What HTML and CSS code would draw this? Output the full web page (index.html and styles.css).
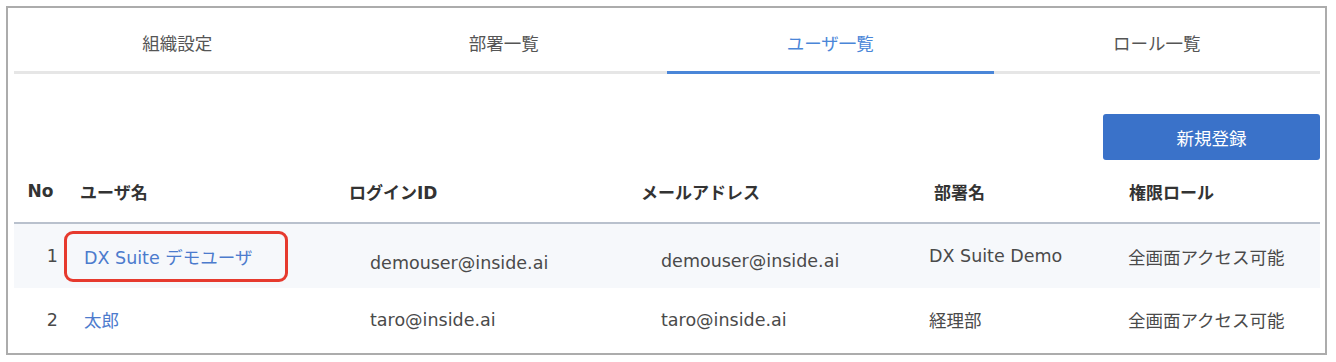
FILE: index.html
```html
<!DOCTYPE html>
<html lang="ja">
<head>
    <meta charset="UTF-8">
    <meta name="viewport" content="width=device-width, initial-scale=1.0">
    <title>ユーザ一覧</title>
    <link rel="stylesheet" href="styles.css">
</head>
<body>
    <div class="panel">
        <div class="tabs">
            <div class="tab">組織設定</div>
            <div class="tab">部署一覧</div>
            <div class="tab active">ユーザ一覧</div>
            <div class="tab">ロール一覧</div>
        </div>
        <div class="toolbar">
            <button class="btn-primary">新規登録</button>
        </div>
        <table class="users">
            <colgroup>
                <col class="c-no">
                <col class="c-name">
                <col class="c-login">
                <col class="c-mail">
                <col class="c-dept">
                <col class="c-role">
            </colgroup>
            <thead>
                <tr>
                    <th class="no">No</th>
                    <th>ユーザ名</th>
                    <th>ログインID</th>
                    <th>メールアドレス</th>
                    <th>部署名</th>
                    <th>権限ロール</th>
                </tr>
            </thead>
            <tbody>
                <tr class="odd">
                    <td class="no">1</td>
                    <td class="name highlight"><a href="#">DX Suite デモユーザ</a></td>
                    <td class="login low">demouser@inside.ai</td>
                    <td class="mail mid">demouser@inside.ai</td>
                    <td class="dept">DX Suite Demo</td>
                    <td class="role">全画面アクセス可能</td>
                </tr>
                <tr class="even">
                    <td class="no">2</td>
                    <td class="name"><a href="#">太郎</a></td>
                    <td class="login">taro@inside.ai</td>
                    <td class="mail">taro@inside.ai</td>
                    <td class="dept">経理部</td>
                    <td class="role">全画面アクセス可能</td>
                </tr>
            </tbody>
        </table>
    </div>
</body>
</html>
```

FILE: styles.css
```css
body {
    font-family: "DejaVu Sans", "Noto Sans CJK JP", sans-serif;
    background-color: #fff;
    color: #444;
    margin: 0;
}
.panel {
    box-sizing: border-box;
    width: 1321px;
    height: 349px;
    margin: 6px 0 0 6px;
    padding: 0 5px 0 6px;
    border: 2px solid #acacac;
    overflow: hidden;
}
/* Tabs */
.tabs {
    display: flex;
}
.tab {
    flex: 1;
    text-align: center;
    font-size: 17.5px;
    line-height: 24px;
    padding: 24px 0 15px;
    color: #555;
    border-bottom: 3px solid #e6e6e6;
}
.tab.active {
    color: #4a86d8;
    border-bottom-color: #4a86d8;
}
.toolbar {
    display: flex;
    justify-content: flex-end;
    padding-top: 40px;
}
.btn-primary {
    width: 217px;
    height: 46px;
    border: none;
    border-radius: 3px;
    background-color: #3a72c9;
    color: #fff;
    font-family: inherit;
    font-size: 17.5px;
    cursor: pointer;
}
/* Table */
.users {
    width: 100%;
    border-collapse: collapse;
    table-layout: fixed;
    font-size: 17.5px;
}
.c-no { width: 53px; }
.c-name { width: 269px; }
.c-login { width: 292px; }
.c-mail { width: 293px; }
.c-dept { width: 195px; }
thead tr { height: 63px; }
tr.odd { height: 65px; }
tr.even { height: 63px; }
th {
    text-align: left;
    font-weight: bold;
    font-size: 17px;
    color: #333;
    padding: 0 0 0 13px;
    border-bottom: 2px solid #b9c1cd;
}
th.no {
    text-align: center;
    padding: 0;
}
td {
    padding: 0;
    color: #4a4a4a;
}
tr.odd td {
    background-color: #f6f8fb;
}
td.no {
    text-align: right;
    padding-right: 9px;
}
td.name { padding-left: 17px; }
td.login { padding-left: 34px; }
td.mail { padding-left: 33px; }
td.dept { padding-left: 8px; }
td.role { padding-left: 12px; }
td.low { padding-top: 13px; }
td.mid { padding-top: 9px; }
.name a {
    color: #4c7bcd;
    text-decoration: none;
}
/* 赤枠の注記 */
.highlight {
    position: relative;
}
.highlight::after {
    content: "";
    position: absolute;
    left: -3px;
    top: 7px;
    width: 224px;
    height: 51px;
    box-sizing: border-box;
    border: 3px solid #e63a2e;
    border-radius: 9px;
}
```
